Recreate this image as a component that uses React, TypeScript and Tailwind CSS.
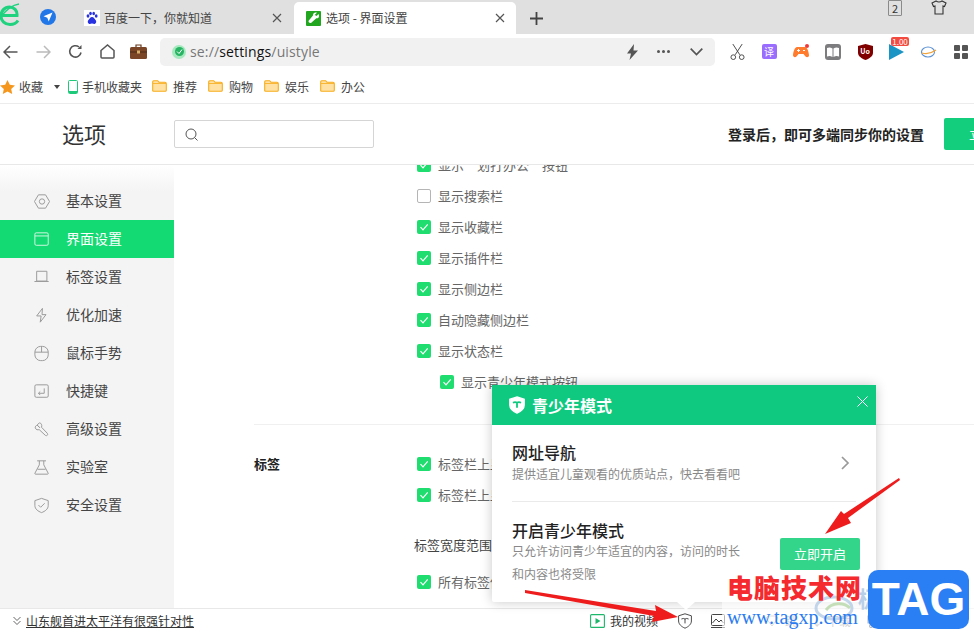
import React from "react";

const FONT = { fontFamily: '"Noto Sans CJK SC", "Noto Sans", sans-serif' };

function Check({ on = true }: { on?: boolean }) {
  if (!on) return <span className="w-[14px] h-[14px] rounded-[2px] border border-[#b5b5b5] bg-white shrink-0" />;
  return (
    <span className="w-[14px] h-[14px] rounded-[2px] bg-[#1fdd6f] shrink-0 flex items-center justify-center">
      <svg width="10" height="10" viewBox="0 0 10 10" fill="none" stroke="#fff" strokeWidth="1.2"><path d="M1.500 5.200 4 7.800 8.700 2.400" /></svg>
    </span>
  );
}

function CheckRow({ label, indent = false }: { label: string; indent?: boolean }) {
  return (
    <div className={`h-[31px] flex items-center gap-[7px] whitespace-nowrap text-[13px] text-[#666] ${indent ? "pl-[23px]" : ""}`}>
      <Check on={label !== "显示搜索栏"} />
      <span>{label}</span>
    </div>
  );
}

function Folder() {
  return (
    <svg width="15" height="13" viewBox="0 0 15 13" className="shrink-0">
      <path d="M.7 11.300V1.700q0-1 1-1h4l1.300 1.600h6q1.300 0 1.300 1.200v6.800q0 1-1 1H1.700q-1 0-1-1Z" fill="#ffe2a3" stroke="#f8ac1c" strokeWidth="1.100" />
      <path d="M1 3.500h13" stroke="#f8ac1c" strokeWidth=".8" />
    </svg>
  );
}

function BookmarkFolder({ label }: { label: string }) {
  return (
    <div className="w-[56px] flex items-center gap-[6px] shrink-0">
      <Folder />
      <span>{label}</span>
    </div>
  );
}

function Ext({ children }: { children: React.ReactNode }) {
  return <div className="w-[32px] flex items-center justify-center shrink-0">{children}</div>;
}

const navIcons: Record<string, React.ReactNode> = {
  基本设置: <><path d="M5 1.500h8l4.500 7.500-4.500 7.500H5L.5 9Z" /><circle cx="9" cy="9" r="3" /></>,
  界面设置: <><rect x="1" y="1.500" width="15" height="14" rx="1.500" /><path d="M1 5h15" /></>,
  标签设置: <><path d="M3 2h11.500v11H3Z" /><path d="M.5 13.500h16" /></>,
  优化加速: <path d="M9.500 1 3 9.500h5L7 16.500l6.500-8.500h-4.500Z" />,
  鼠标手势: <><rect x="1" y="1" width="15" height="16" rx="6.500" /><path d="M8.500 1v6.500M1 7.500h15" /></>,
  快捷键: <><rect x="1" y="1.500" width="15" height="14" rx="1.500" /><path d="M11.500 5.500v5.500h-6.500M7 9l-2 2 2 2" /></>,
  高级设置: <path d="M6 1.500 3.500 4l3 3L4.200 4.500C2 4 1 6 1.500 7.500c.7 1.800 2.800 2.200 4.300 1.600l7 6.500c1.500 1.200 3.500-.8 2.200-2.300L8.500 6.500c.8-2.500-.5-5-2.500-5Z" />,
  实验室: <path d="M3.500 1.500h10M6 1.500V6L1 15.500q-.2 1 .8 1h13.400q1 0 .8-1L11 6V1.500M4 11h9" />,
  安全设置: <><path d="M8.500 1 16 3.500V9c0 4-3.500 6.500-7.500 8C4.500 15.500 1 13 1 9V3.500Z" /><path d="m5 8.500 2.500 2.500 4.500-4.500" /></>,
};

const navItems = ["基本设置", "界面设置", "标签设置", "优化加速", "鼠标手势", "快捷键", "高级设置", "实验室", "安全设置"];

function NavItem({ label }: { label: string }) {
  const active = label === "界面设置";
  return (
    <div className={`h-[38px] pl-[34px] flex items-center gap-[16px] text-[14px] ${active ? "bg-[#13da73] text-white" : "text-[#444]"}`}>
      <svg width="16" height="17" viewBox="0 0 18 18" fill="none" stroke={active ? "#d4f7e2" : "#9a9a9a"} strokeWidth="1.100">{navIcons[label]}</svg>
      <span className="-mt-[2px]">{label}</span>
    </div>
  );
}

function TeenShield({ size, fill, stroke, weight = 2 }: { size: number; fill: string; stroke: string; weight?: number }) {
  return (
    <svg width={size} height={size} viewBox="0 0 20 20">
      <path d="M10 1 18 3.500V10c0 4-3.500 7-8 9-4.500-2-8-5-8-9V3.500Z" fill={fill} stroke={fill === "none" ? "#444" : fill} strokeWidth={fill === "none" ? 1.2 : 1.5} />
      <path d="M5.500 7.500q2.500-1.300 4.500 0 2-1.300 4.500 0M10 7.500V13" fill="none" stroke={stroke} strokeWidth={weight} />
    </svg>
  );
}

export default function App() {
  return (
    <div className="relative w-[974px] h-[633px] overflow-hidden bg-white flex flex-col select-none" style={FONT}>
      {/* Tab strip */}
      <div className="h-[34px] bg-[#e0e0e0] flex items-end shrink-0 relative">
        <div className="w-[74px] h-[34px] flex items-center shrink-0">
          <svg width="21" height="26" viewBox="0 0 21 26" fill="none" className="-mt-[4px]">
            <path d="M1.500 13.500h15.500c.5-5-3-8.500-7.500-8.500C4.500 5 1 9 1 14c0 5 4 8.500 9 8.500 4 0 6.500-1.500 8-4" stroke="#1ed27e" strokeWidth="3" />
            <path d="M0 16C5 9 12 3 19 2" stroke="#1ed27e" strokeWidth="1.500" />
          </svg>
          <span className="ml-[19px] w-[16px] h-[16px] rounded-full bg-[#2277e8] flex items-center justify-center">
            <svg width="10" height="10" viewBox="0 0 10 10"><path d="M9.500.5 .5 4.300 4.300 5.700 5.700 9.500Z" fill="#fff" /></svg>
          </span>
        </div>
        <div className="w-[220px] h-[32px] flex items-center pl-[10px] shrink-0 text-[12px] text-[#444]">
          <span className="w-[16px] h-[16px] bg-white flex items-center justify-center shrink-0">
            <svg width="14" height="14" viewBox="0 0 14 14" fill="#2932e1">
              <ellipse cx="3" cy="5" rx="1.400" ry="1.800" /><ellipse cx="5.500" cy="2.500" rx="1.300" ry="1.800" /><ellipse cx="8.700" cy="2.500" rx="1.300" ry="1.800" /><ellipse cx="11.200" cy="5" rx="1.400" ry="1.800" />
              <path d="M7 6C5 6 4.500 8 3.500 9c-1.500 1.500-.5 4 1.500 4 1 0 1.300-.4 2-.4s1 .4 2 .4c2 0 3-2.500 1.500-4C9.500 8 9 6 7 6Z" />
            </svg>
          </span>
          <span className="ml-[4px] whitespace-nowrap">百度一下，你就知道</span>
          <svg width="10" height="10" viewBox="0 0 10 10" stroke="#555" strokeWidth="1.200" className="ml-auto mr-[12px]"><path d="m1 1 8 8M9 1 1 9" /></svg>
        </div>
        <div className="w-[222px] h-[32px] bg-white rounded-t-[5px] flex items-center pl-[12px] shrink-0 text-[12px] text-[#444]">
          <span className="w-[15px] h-[15px] bg-[#22a51f] rounded-[1px] flex items-center justify-center">
            <svg width="12" height="12" viewBox="0 0 12 12" fill="#fff"><path d="M10.500 2 8.500 4 7.500 3.500 7 2.500 9 .8C7-.2 4.800 1 5 3.500L.8 8.500c-1 1.500 1 3.300 2.500 2.300l5-4.500C10.500 6.800 11.800 4.500 10.500 2Z" /></svg>
          </span>
          <span className="ml-[5px] whitespace-nowrap">选项 - 界面设置</span>
          <svg width="10" height="10" viewBox="0 0 10 10" stroke="#555" strokeWidth="1.200" className="ml-auto mr-[11px]"><path d="m1 1 8 8M9 1 1 9" /></svg>
        </div>
        <div className="h-[32px] flex items-center pl-[14px] shrink-0">
          <svg width="13" height="13" viewBox="0 0 13 13" stroke="#444" strokeWidth="1.800"><path d="M6.500 0v13M0 6.500h13" /></svg>
        </div>
        <div className="absolute left-[888px] top-0 w-[14px] h-[16px] border border-[#8a8a8a] rounded-[1px] text-[11px] leading-[14px] text-center text-[#333]">2</div>
        <svg width="16" height="15" viewBox="0 0 16 15" fill="none" stroke="#333" strokeWidth="1.100" className="absolute left-[931px] top-0">
          <path d="M5 1 1 3l1.500 3.500L4 6v8h8V6l1.500.5L15 3l-4-2q-3 2-6 0Z" />
        </svg>
      </div>

      {/* Address toolbar */}
      <div className="h-[35px] shrink-0 flex items-center pl-[3px]">
        <div className="w-[157px] flex items-center shrink-0">
          <svg width="15" height="14" viewBox="0 0 15 14" fill="none" stroke="#555" strokeWidth="1.500"><path d="M14.500 7H1M7 1 1 7l6 6" /></svg>
          <svg width="15" height="14" viewBox="0 0 15 14" fill="none" stroke="#bbb" strokeWidth="1.500" className="ml-[18px]"><path d="M.5 7H14M8 1l6 6-6 6" /></svg>
          <svg width="15" height="15" viewBox="0 0 15 15" fill="none" stroke="#555" strokeWidth="1.600" className="ml-[17px]"><path d="M13 8.500A5.700 5.700 0 1 1 11 3" /><path d="M13.500 1v4h-4Z" fill="#555" strokeWidth="0" /></svg>
          <svg width="15" height="15" viewBox="0 0 15 15" fill="none" stroke="#555" strokeWidth="1.500" className="ml-[17px]"><path d="M1 6.500 7.500 1 14 6.500V13q0 1-1 1H2q-1 0-1-1Z" /></svg>
          <svg width="17" height="15" viewBox="0 0 17 15" className="ml-[15px]"><path d="M6 3V1h5v2" fill="none" stroke="#6b3b1f" strokeWidth="1.200" /><rect x="0" y="3" width="17" height="12" rx="1.500" fill="#7a4526" /><rect x="0" y="7.500" width="17" height="1" fill="#4d2a14" /><rect x="7" y="6.500" width="3" height="3" fill="#d9b06a" /></svg>
        </div>
        <div className="w-[555px] h-[28px] rounded-[5px] bg-[#f1f1f1] flex items-center pl-[12px] pr-[12px] shrink-0">
          <span className="w-[14px] h-[14px] rounded-full bg-[#a6e9bf] flex items-center justify-center shrink-0">
            <span className="w-[9px] h-[9px] rounded-full bg-[#27b463] flex items-center justify-center">
              <svg width="7" height="7" viewBox="0 0 7 7" fill="none" stroke="#fff" strokeWidth="1"><path d="m1 3.500 2 2 3-4" /></svg>
            </span>
          </span>
          <span className="ml-[4px] text-[14px] tracking-[0.15px] text-[#777] whitespace-nowrap" style={{ fontFamily: '"Open Sans", sans-serif' }}>se://<span className="text-[#111]">settings</span>/uistyle</span>
          <svg width="13" height="16" viewBox="0 0 13 16" fill="#555" className="ml-auto"><path d="M8 0 1 9.500h4L3.500 16 12 6.500H7.500Z" /></svg>
          <div className="ml-[18px] flex gap-[2px]">
            <span className="w-[3px] h-[3px] rounded-full bg-[#555]" /><span className="w-[3px] h-[3px] rounded-full bg-[#555]" /><span className="w-[3px] h-[3px] rounded-full bg-[#555]" />
          </div>
          <svg width="13" height="8" viewBox="0 0 13 8" fill="none" stroke="#555" strokeWidth="1.700" className="ml-[20px]"><path d="m.7.7 5.800 5.800L12.300.7" /></svg>
        </div>
        {/* Extensions */}
        <div className="flex-1 flex items-center pl-[6px]">
          <Ext><svg width="15" height="16" viewBox="0 0 16 17" fill="none" stroke="#444" strokeWidth="1"><path d="m3 0 7.500 11.500M13 0 5.500 11.500" /><circle cx="3.500" cy="14" r="2.500" /><circle cx="12.500" cy="14" r="2.500" /></svg></Ext>
          <Ext><span className="w-[15px] h-[15px] rounded-[2px] bg-[#9a6dff] text-white text-[10px] leading-[15px] text-center">译</span></Ext>
          <Ext><svg width="16" height="15" viewBox="0 0 16 15"><path d="M4 3h8c2 0 3.500 4 4 8 .2 2-2 3-3.500 1.500L10.500 10h-5l-2 2.500C2 14 0 13 0 11c.5-4 2-8 4-8Z" fill="#ff7b2e" /><circle cx="14" cy="2" r="2" fill="#f03a3a" /><path d="M4 6.500h3M5.500 5v3M10 6.500h2" stroke="#fff" strokeWidth="1" /></svg></Ext>
          <Ext>
            <span className="w-[16px] h-[16px] rounded-[3px] bg-[#7d7d80] flex items-center justify-center">
              <svg width="12" height="10" viewBox="0 0 12 10" fill="#fff"><path d="M0 1q3-1 5.500.5V10Q3 8.500 0 9.500ZM12 1Q9 0 6.500 1.500V10Q9 8.500 12 9.500Z" /></svg>
            </span>
          </Ext>
          <Ext>
            <span className="relative">
              <svg width="15" height="16" viewBox="0 0 15 16" className="block"><path d="M7.500 0 15 2v7c0 3-3.500 5.500-7.500 7C3.500 14.500 0 12 0 9V2Z" fill="#800000" /></svg>
              <span className="absolute inset-0 text-white text-[7px] font-bold text-center leading-[15px]">Uo</span>
            </span>
          </Ext>
          <Ext>
            <span className="relative w-[16px] h-[16px]">
              <svg width="15" height="16" viewBox="0 0 15 16"><path d="M0 0 15 8 0 16Z" fill="#1a94c4" /></svg>
              <span className="absolute -top-[7px] left-[2px] w-[18px] h-[9px] rounded-[2px] bg-[#f44b41] text-white text-[8px] leading-[9px] text-center">1.00</span>
            </span>
          </Ext>
          <Ext><svg width="16" height="12" viewBox="0 0 16 12" fill="none"><ellipse cx="7" cy="6" rx="6.500" ry="5" stroke="#5f93d3" strokeWidth="1.100" /><path d="M1 7q7 2 14-3" stroke="#f0a43a" strokeWidth="1.300" /></svg></Ext>
          <Ext>
            <div className="grid grid-cols-2 gap-[2px]">
              <span className="w-[6px] h-[6px] rounded-[1px] bg-[#555]" /><span className="w-[6px] h-[6px] rounded-[1px] bg-[#555]" /><span className="w-[6px] h-[6px] rounded-[1px] bg-[#555]" /><span className="w-[6px] h-[6px] rounded-[1px] bg-[#555]" />
            </div>
          </Ext>
        </div>
      </div>

      {/* Bookmarks */}
      <div className="h-[35px] shrink-0 flex items-center pt-[1px] text-[12px] text-[#444] border-b border-[#ececec]">
        <svg width="15" height="14" viewBox="0 0 15 14" className="shrink-0"><path d="M7.500 0 9.800 4.800 15 5.400 11.200 9l1 5-4.700-2.500L2.800 14l1-5L0 5.400l5.200-.6Z" fill="#f6971d" /></svg>
        <span className="ml-[4px]">收藏</span>
        <span className="ml-[11px] w-0 h-0 border-x-[3px] border-x-transparent border-t-[4px] border-t-[#444]" />
        <svg width="10" height="14" viewBox="0 0 10 14" fill="none" className="ml-[8px] shrink-0"><rect x=".5" y=".5" width="9" height="13" rx="1" stroke="#1ec97a" /><rect x="1" y="11" width="8" height="2" fill="#1ec97a" /></svg>
        <span className="ml-[4px] w-[70px] shrink-0">手机收藏夹</span>
        <BookmarkFolder label="推荐" />
        <BookmarkFolder label="购物" />
        <BookmarkFolder label="娱乐" />
        <BookmarkFolder label="办公" />
      </div>

      {/* Options header */}
      <div className="h-[61px] shrink-0 flex items-center border-b border-[#e8e8e8]">
        <div className="w-[174px] pl-[62px] text-[22px] leading-[30px] -mt-[2px] text-[#333] shrink-0">选项</div>
        <div className="w-[200px] h-[28px] border border-[#d5d5d5] rounded-[2px] flex items-center pl-[10px] shrink-0">
          <svg width="13" height="13" viewBox="0 0 13 13" fill="none" stroke="#555" strokeWidth="1"><circle cx="6" cy="6" r="5" /><path d="m9.500 9.500 3 3" /></svg>
        </div>
        <div className="ml-auto text-[14px] font-bold text-[#222] whitespace-nowrap">登录后，即可多端同步你的设置</div>
        <div className="ml-[20px] w-[30px] h-[32px] bg-[#13cf7d] rounded-l-[2px] text-white text-[13px] leading-[32px] pl-[25px] overflow-hidden whitespace-nowrap shrink-0">立即登录</div>
      </div>

      {/* Body */}
      <div className="flex-1 min-h-0 flex">
        <div className="w-[174px] shrink-0 bg-[#f4f4f4] bg-gradient-to-b from-white to-[#f4f4f4] to-[6%] pt-[17px]">
          {navItems.map((n) => <NavItem key={n} label={n} />)}
        </div>
        <div className="flex-1 min-w-0 overflow-hidden pl-[80px]">
          <div className="-mt-[16px] pl-[163px]">
            <CheckRow label="显示“划打办公”按钮" />
            <CheckRow label="显示搜索栏" />
            <CheckRow label="显示收藏栏" />
            <CheckRow label="显示插件栏" />
            <CheckRow label="显示侧边栏" />
            <CheckRow label="自动隐藏侧边栏" />
            <CheckRow label="显示状态栏" />
            <CheckRow label="显示青少年模式按钮" indent />
          </div>
          <div className="mt-[27px] border-t border-[#f0f0f0] flex pt-[23px]">
            <div className="w-[163px] text-[13px] font-bold text-[#222] leading-[31px] shrink-0">标签</div>
            <div>
              <CheckRow label="标签栏上显示" />
              <CheckRow label="标签栏上显示" />
              <div className="h-[31px] mt-[19px] -ml-[3px] text-[13px] text-[#444] flex items-center whitespace-nowrap">标签宽度范围</div>
              <div className="mt-[6px]"><CheckRow label="所有标签使用" /></div>
            </div>
          </div>
        </div>
      </div>

      {/* Status bar */}
      <div className="h-[25px] shrink-0 border-t border-[#e8e8e8] flex items-center text-[12px] text-[#333] pl-[13px] relative">
        <svg width="8" height="10" viewBox="0 0 8 10" fill="none" stroke="#555" strokeWidth=".9"><path d="m.5 1 3.500 3.500L7.500 1M.5 5 4 8.500 7.500 5" /></svg>
        <span className="ml-[5px] underline whitespace-nowrap">山东舰首进太平洋有很强针对性</span>
        <svg width="15" height="14" viewBox="0 0 15 14" fill="none" className="ml-[396px] shrink-0"><rect x=".6" y=".6" width="13.800" height="12.800" rx="1" stroke="#1bb76a" strokeWidth="1.100" /><path d="M5.500 4v6l5-3Z" fill="#1bb76a" /></svg>
        <span className="ml-[5px] whitespace-nowrap">我的视频</span>
        <span className="ml-[19px] flex shrink-0"><TeenShield size={16} fill="none" stroke="#444" weight={1.2} /></span>
        <svg width="14" height="14" viewBox="0 0 14 14" fill="none" stroke="#444" strokeWidth="1" className="ml-[18px] shrink-0"><rect x=".5" y=".5" width="13" height="11" rx="1" /><path d="m1.500 9 3.500-4 3 3 2-2 2.500 3M0 13.500h14" /></svg>
        <svg width="14" height="12" viewBox="0 0 14 12" fill="none" stroke="#aaa" strokeWidth="1" className="ml-[40px] shrink-0"><path d="M1 3 7 11l6-8-2-2H3Z" /></svg>
        <span className="ml-[6px] text-[#999]">跳</span>
        <span className="ml-[14px] text-[#999]">↓</span>
        <span className="ml-[4px] text-[#999]">下载</span>
        <svg width="16" height="13" viewBox="0 0 16 13" fill="none" stroke="#555" strokeWidth="1.100" className="ml-[16px] shrink-0"><path d="M1 1h14v7H1Z" /><circle cx="4" cy="11" r="1.500" /><circle cx="12" cy="11" r="1.500" /></svg>
        <svg width="11" height="13" viewBox="0 0 11 13" fill="none" stroke="#555" strokeWidth="1" className="ml-[59px] shrink-0"><rect x=".5" y="2.500" width="8" height="10" /><path d="M3 .5h7.500V10" /></svg>
      </div>

      {/* Teen mode popup */}
      <div className="absolute left-[492px] top-[385px] w-[384px] h-[217px] bg-white rounded-b-[2px] shadow-[0_0_12px_rgba(0,0,0,0.22)] z-10">
        <div className="h-[40px] bg-[#0ec97f] flex items-center pl-[16px] text-white text-[16px] font-bold">
          <TeenShield size={18} fill="#fff" stroke="#0ec97f" />
          <span className="ml-[6px]">青少年模式</span>
          <svg width="11" height="11" viewBox="0 0 11 11" stroke="#fff" strokeWidth="1" className="ml-auto mr-[8px] -mt-[8px]"><path d="m.5.5 10 10M10.500.5l-10 10" /></svg>
        </div>
        <div className="mx-[20px] h-[77px] border-b border-[#eaeaea] flex items-center">
          <div className="flex-1 -mt-[1px]">
            <div className="text-[16px] font-medium leading-[24px] -mb-[1px] -mt-[1px] text-[#222]">网址导航</div>
            <div className="text-[12px] leading-[20px] pt-[1px] text-[#888]">提供适宜儿童观看的优质站点，快去看看吧</div>
          </div>
          <svg width="9" height="14" viewBox="0 0 9 14" fill="none" stroke="#999" strokeWidth="1.700" className="mr-[6px]"><path d="m1 1 6 6-6 6" /></svg>
        </div>
        <div className="mx-[20px] pt-[16px] flex">
          <div className="flex-1">
            <div className="text-[16px] font-medium leading-[24px] text-[#222]">开启青少年模式</div>
            <div className="text-[12px] leading-[23px] text-[#888] -mt-[3px]">只允许访问青少年适宜的内容，访问的时长<br />和内容也将受限</div>
          </div>
          <div className="w-[80px] h-[32px] mt-[20px] -mr-[4px] rounded-[2px] bg-[#33d58a] text-white text-[13px] leading-[32px] text-center shrink-0">立即开启</div>
        </div>
      </div>
      <div className="absolute left-[677px] top-[602px] w-0 h-0 z-10 border-x-[9px] border-x-transparent border-t-[8px] border-t-white" />

      {/* Watermark overlay */}
      <div className="absolute left-[722px] top-[602px] w-[252px] h-[31px] bg-white/60 z-20" />
      <svg width="50" height="40" viewBox="0 0 50 40" fill="none" className="absolute left-[812px] top-[588px] z-20">
        <ellipse cx="22" cy="20" rx="18" ry="11" stroke="#a9c5e2" strokeWidth="3" opacity=".7" />
        <path d="M14 22c6-8 18-8 24-2" stroke="#b7d8a8" strokeWidth="3" opacity=".8" />
      </svg>
      <div className="absolute left-[858px] top-[581px] z-20 text-[22px] font-bold text-[#b9cfe8] whitespace-nowrap">极光下载站</div>
      <div className="absolute left-[870px] top-[612px] z-20 text-[14px] text-[#c9dcef] whitespace-nowrap">www.xz7.com</div>
      <div className="absolute left-[727px] top-[571px] z-30 text-[26px] leading-[32px] font-black text-[#f42a2f] tracking-[1px] whitespace-nowrap">电脑技术网</div>
      <div className="absolute left-[727px] top-[604px] z-30 text-[20px] leading-[26px] text-[#2b7cf0] whitespace-nowrap" style={{ fontFamily: '"Liberation Serif", serif' }}>www.tagxp.com</div>
      <div className="absolute left-[868px] top-[570px] w-[101px] h-[59px] rounded-[10px] bg-[#2b7ff5] z-30 text-white font-bold text-[46px] leading-[59px] text-center" style={{ fontFamily: '"Liberation Sans", sans-serif' }}>TAG</div>

      {/* Red annotation arrows */}
      <svg width="974" height="633" viewBox="0 0 974 633" className="absolute left-0 top-0 z-40 pointer-events-none">
        <path d="M900 480 L848 518 L851 523 L825 534 L841 511 L844 514 L899 478 Z" fill="#ee1c1c" />
        <path d="M525 590 L656 611 L655 605 L678 617 L652 622 L654 616 L525 593 Z" fill="#ee1c1c" />
      </svg>
    </div>
  );
}
